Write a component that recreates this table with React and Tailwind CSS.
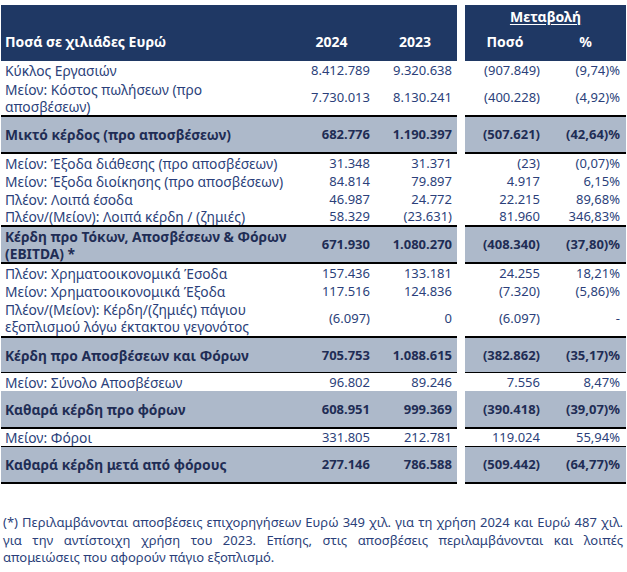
import React from "react"

const rows = [
  { label: "Κύκλος Εργασιών", v: ["8.412.789", "9.320.638", "(907.849)", "(9,74)%"], kind: "plain", h: "h-[19px]", line: "" },
  { label: ["Μείον: Κόστος πωλήσεων (προ", "αποσβέσεων)"], v: ["7.730.013", "8.130.241", "(400.228)", "(4,92)%"], kind: "plain", h: "h-[37px]", line: "border-b-2" },
  { label: "Μικτό κέρδος (προ αποσβέσεων)", v: ["682.776", "1.190.397", "(507.621)", "(42,64)%"], kind: "total", h: "h-[37px]", line: "border-b-2" },
  { label: "Μείον: Έξοδα διάθεσης (προ αποσβέσεων)", v: ["31.348", "31.371", "(23)", "(0,07)%"], kind: "plain", h: "h-[18px]", line: "" },
  { label: "Μείον: Έξοδα διοίκησης (προ αποσβέσεων)", v: ["84.814", "79.897", "4.917", "6,15%"], kind: "plain", h: "h-[18px]", line: "" },
  { label: "Πλέον: Λοιπά έσοδα", v: ["46.987", "24.772", "22.215", "89,68%"], kind: "plain", h: "h-[18px]", line: "" },
  { label: "Πλέον/(Μείον): Λοιπά κέρδη / (ζημιές)", v: ["58.329", "(23.631)", "81.960", "346,83%"], kind: "plain", h: "h-[19px]", line: "border-b-2" },
  { label: ["Κέρδη προ Τόκων, Αποσβέσεων & Φόρων", "(EBITDA) *"], v: ["671.930", "1.080.270", "(408.340)", "(37,80)%"], kind: "total", h: "h-[37px]", line: "border-b-2" },
  { label: "Πλέον: Χρηματοοικονομικά Έσοδα", v: ["157.436", "133.181", "24.255", "18,21%"], kind: "plain", h: "h-[19px]", line: "" },
  { label: "Μείον: Χρηματοοικονομικά Έξοδα", v: ["117.516", "124.836", "(7.320)", "(5,86)%"], kind: "plain", h: "h-[17px]", line: "" },
  { label: ["Πλέον/(Μείον): Κέρδη/(ζημιές) πάγιου", "εξοπλισμού λόγω έκτακτου γεγονότος"], v: ["(6.097)", "0", "(6.097)", "-"], kind: "plain", h: "h-[38px]", line: "border-b-2" },
  { label: "Κέρδη προ Αποσβέσεων και Φόρων", v: ["705.753", "1.088.615", "(382.862)", "(35,17)%"], kind: "total", h: "h-[35px]", line: "border-b" },
  { label: "Μείον: Σύνολο Αποσβέσεων", v: ["96.802", "89.246", "7.556", "8,47%"], kind: "plain", h: "h-[18px]", line: "" },
  { label: "Καθαρά κέρδη προ φόρων", v: ["608.951", "999.369", "(390.418)", "(39,07)%"], kind: "total", h: "h-[38px]", line: "border-b-2" },
  { label: "Μείον: Φόροι", v: ["331.805", "212.781", "119.024", "55,94%"], kind: "plain", h: "h-[18px]", line: "border-b" },
  { label: "Καθαρά κέρδη μετά από φόρους", v: ["277.146", "786.588", "(509.442)", "(64,77)%"], kind: "total", h: "h-[37px]", line: "border-b-2" },
]

function Row({ row }) {
  const total = row.kind === "total"
  const bg = total ? "bg-[#adb9ca] font-bold text-[#1f2d55]" : "bg-white text-[#2b3f7a]"
  const lines = Array.isArray(row.label) ? row.label : [row.label]

  return (
    <div className="flex gap-[8px]">
      <div className={`grid w-[456px] grid-cols-[289px_83px_84px] items-center overflow-hidden border-black ${row.h} ${row.line} ${bg}`}>
        <div className="pl-[4px] text-[13.8px] leading-[17px]">
          {lines.map((l, i) => (
            <div key={i}>{l}</div>
          ))}
        </div>
        <div className="pr-[3px] text-right leading-[17px]">{row.v[0]}</div>
        <div className="pr-[5px] text-right leading-[17px]">{row.v[1]}</div>
      </div>
      <div className={`grid w-[161px] grid-cols-[80px_81px] items-center overflow-hidden border-black ${row.h} ${row.line} ${bg}`}>
        <div className="pr-[5px] text-right leading-[17px]">{row.v[2]}</div>
        <div className="pr-[6px] text-right leading-[17px]">{row.v[3]}</div>
      </div>
    </div>
  )
}

export default function App() {
  return (
    <div className="min-h-[572px] w-[627px] bg-white pl-[1px] pt-[5px] font-['Noto_Sans',sans-serif] text-[13px]">

      {/* HEADER */}
      <div className="flex gap-[8px] text-white">
        <div className="grid h-[56px] w-[456px] grid-cols-[289px_83px_84px] items-end bg-[#1f3864] pb-[9px] text-[14px] font-bold">
          <div className="pl-[4px]">Ποσά σε χιλιάδες Ευρώ</div>
          <div className="text-center">2024</div>
          <div className="text-center">2023</div>
        </div>
        <div className="flex h-[56px] w-[161px] flex-col bg-[#1f3864] text-[14px] font-bold">
          <div className="pt-[1px] text-center underline underline-offset-2">Μεταβολή</div>
          <div className="mt-auto grid grid-cols-[80px_81px] pb-[9px]">
            <div className="text-center">Ποσό</div>
            <div className="text-center">%</div>
          </div>
        </div>
      </div>

      {/* ROWS */}
      {rows.map((row, i) => (
        <Row key={i} row={row} />
      ))}

      {/* FOOTNOTE */}
      <p className="mt-[30px] w-[622px] pl-[2px] text-justify text-[13px] leading-[17.5px] text-[#2b3f7a]">
        (*) Περιλαμβάνονται αποσβέσεις επιχορηγήσεων Ευρώ 349 χιλ. για τη χρήση 2024 και Ευρώ 487 χιλ.
        για την αντίστοιχη χρήση του 2023. Επίσης, στις αποσβέσεις περιλαμβάνονται και λοιπές
        απομειώσεις που αφορούν πάγιο εξοπλισμό.
      </p>
    </div>
  )
}
